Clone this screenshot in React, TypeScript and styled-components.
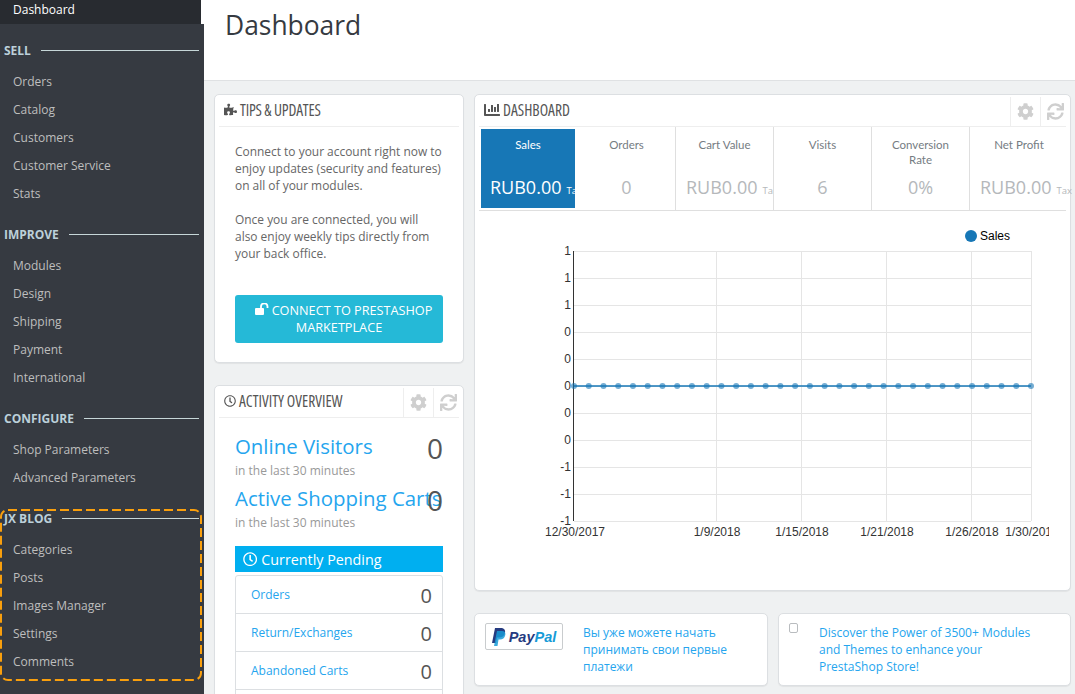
import styled, { createGlobalStyle } from "styled-components";
import { FaChartBar, FaCog, FaPuzzlePiece, FaRegClock, FaSync } from "react-icons/fa";

const GlobalStyle = createGlobalStyle`
  html, body {
    margin: 0;
    height: 694px;
    overflow: hidden;
    background: #fff;
    font-family: "Open Sans", "Noto Sans", sans-serif;
  }
  * { box-sizing: border-box; }
`;

const Page = styled.div`
  display: flex;
  width: 1075px;
  height: 694px;
  overflow: hidden;
`;

const Sidebar = styled.nav`
  flex: 0 0 204px;
  display: flex;
  flex-direction: column;
`;

const TopItem = styled.div`
  width: 201px;
  height: 24px;
  flex: none;
  padding: 0 0 6px 13px;
  display: flex;
  align-items: center;
  background: #282b30;
  color: #fff;
  font-size: 12px;
`;

const NavBody = styled.div`
  flex: 1;
  background: #363a41;
  padding-top: 9px;
`;

const NavSection = styled.section`
  position: relative;
  margin-bottom: 10px;
`;

const DashedMark = styled.svg`
  position: absolute;
  left: 0;
  top: 8px;
  pointer-events: none;
`;

const NavTitle = styled.div`
  height: 34px;
  padding: 0 5px 0 4px;
  display: flex;
  align-items: center;
  gap: 10px;
  color: #bcd0da;
  font-size: 12px;
  font-weight: 700;
  &::after {
    content: "";
    flex: 1;
    height: 1px;
    background: #c6d6d8;
  }
`;

const NavItem = styled.div`
  height: 28px;
  padding-left: 13px;
  display: flex;
  align-items: center;
  color: #bebebe;
  font-size: 12px;
`;

const Main = styled.main`
  flex: 1;
  min-width: 0;
  display: flex;
  flex-direction: column;
`;

const Header = styled.header`
  height: 81px;
  flex: none;
  padding: 7px 0 0 21px;
  background: #fff;
  border-bottom: 1px solid #dfe1e3;
`;

const PageTitle = styled.h1`
  margin: 0;
  color: #363a41;
  font-size: 26.4px;
  line-height: 36px;
  font-weight: 400;
`;

const Content = styled.div`
  flex: 1;
  background: #eff1f2;
  padding: 13px 0 0 10px;
  display: grid;
  grid-template-columns: 250px 597px;
  gap: 10px;
  align-items: start;
`;

const Column = styled.div`
  display: flex;
  flex-direction: column;
`;

const Panel = styled.div<{ $height?: number }>`
  background: #fff;
  border: 1px solid #dcdfe2;
  border-radius: 5px;
  box-shadow: 0 1px 1px rgba(0, 0, 0, 0.06);
  height: ${(p) => (p.$height ? `${p.$height}px` : "auto")};
  margin-bottom: 22px;
  padding: 0 4px;
`;

const PanelHead = styled.div`
  height: 32px;
  display: flex;
  align-items: center;
  border-bottom: 1px solid #eeeeee;
`;

const HeadTitle = styled.div<{ $tight?: boolean }>`
  flex: 1;
  display: flex;
  align-items: center;
  gap: 3px;
  margin-bottom: 2px;
  padding-left: 5px;
  white-space: nowrap;
  font-size: 15.5px;
  font-stretch: 75%;
  letter-spacing: ${(p) => (p.$tight ? "-0.2px" : "0")};
  text-transform: uppercase;
  color: #555;
`;

const ToolGroup = styled.div`
  display: flex;
  margin-right: -4px;
`;

const ToolButton = styled.div`
  width: 30px;
  height: 29px;
  margin-top: 2px;
  display: flex;
  align-items: center;
  justify-content: center;
  border-left: 1px solid #eeeeee;
  color: #cfcfcf;
  font-size: 17px;
`;

const TipsBody = styled.div`
  padding: 16px 16px 0;
  color: #666;
  font-size: 11.95px;
  line-height: 17px;
`;

const TipsText = styled.p`
  margin: 0 0 17px;
`;

const ConnectButton = styled.div`
  height: 48px;
  margin-top: 33px;
  padding: 7px 8px;
  border-radius: 3px;
  background: #25b9d7;
  color: #fff;
  font-size: 12.7px;
  line-height: 17px;
  text-align: center;
  text-transform: uppercase;
  svg { margin: 0 3px 0 9px; }
`;

const ActivityBody = styled.div`
  padding: 12px 16px 0;
`;

const StatRow = styled.div`
  display: grid;
  grid-template-columns: minmax(0, 1fr) auto;
  height: 52px;
`;

const StatTitle = styled.div`
  white-space: nowrap;
  color: #25a5ee;
  font-size: 20.4px;
  line-height: 33px;
`;

const StatNote = styled.div`
  color: #999;
  font-size: 12px;
  line-height: 14px;
  margin-top: 1px;
`;

const StatValue = styled.div`
  color: #555;
  font-size: 28px;
  line-height: 36px;
`;

const PendingBar = styled.div`
  height: 26px;
  margin-top: 12px;
  padding-left: 8px;
  display: flex;
  align-items: center;
  gap: 4px;
  background: #00aff0;
  color: #fff;
  font-size: 14.3px;
  font-weight: 500;
`;

const PendingList = styled.div`
  margin-top: 3px;
  border: 1px solid #dcdfe2;
  border-radius: 3px 3px 0 0;
`;

const PendingRow = styled.div`
  height: 38px;
  padding: 0 10px 0 15px;
  display: flex;
  align-items: center;
  justify-content: space-between;
  border-bottom: 1px solid #dcdfe2;
  color: #25a5ee;
  font-size: 12px;
`;

const PendingValue = styled.span`
  color: #555;
  font-size: 20px;
  margin-top: 2px;
`;

const KpiRow = styled.div`
  display: grid;
  grid-template-columns: 99px repeat(5, 98px);
  height: 84px;
  border-bottom: 1px solid #dfdfdf;
`;

const Kpi = styled.div<{ $active?: boolean }>`
  margin: ${(p) => (p.$active ? "2px 3px 0 2px" : "0")};
  height: ${(p) => (p.$active ? "79px" : "83px")};
  border-right: ${(p) => (p.$active ? "none" : "1px solid #dfdfdf")};
  background: ${(p) => (p.$active ? "#1777b6" : "transparent")};
  position: relative;
  overflow: hidden;
  text-align: center;
  padding-top: ${(p) => (p.$active ? "8px" : "10px")};
  &:last-child { border-right: none; overflow: visible; }
`;

const KpiLabel = styled.div<{ $active?: boolean }>`
  font-family: Lato, "Open Sans", sans-serif;
  font-size: 11.5px;
  line-height: 15px;
  padding: 0 16px;
  color: ${(p) => (p.$active ? "#fff" : "#757c82")};
`;

const KpiValue = styled.div<{ $active?: boolean; $tax?: boolean }>`
  position: absolute;
  left: ${(p) => (p.$active ? "9px" : p.$tax ? "10px" : "0")};
  right: 0;
  top: ${(p) => (p.$active ? "46px" : "48px")};
  display: flex;
  justify-content: ${(p) => (p.$tax ? "flex-start" : "center")};
  white-space: nowrap;
  align-items: baseline;
  font-size: 18px;
  line-height: 24px;
  color: ${(p) => (p.$active ? "#fff" : "#b5b8bb")};
`;

const KpiTax = styled.span`
  margin-left: 5px;
  font-size: 9.5px;
  width: 0;
`;

const ChartBox = styled.div`
  height: 379px;
  overflow: hidden;
`;

const PromoRow = styled.div`
  display: grid;
  grid-template-columns: 294px 293px;
  gap: 10px;
`;

const Promo = styled.div`
  height: 73px;
  background: #fff;
  border: 1px solid #dcdfe2;
  border-radius: 5px;
  box-shadow: 0 1px 1px rgba(0, 0, 0, 0.06);
  padding: 10px 25px 0 10px;
  display: grid;
  column-gap: 20px;
  grid-template-columns: 78px 1fr;
`;

const PromoAlt = styled(Promo)`
  grid-template-columns: 10px 1fr;
`;

const PromoText = styled.div`
  color: #25a5ee;
  font-size: 12px;
  line-height: 17px;
`;

const PayPalBadge = styled.div`
  height: 27px;
  margin-top: -1px;
  display: flex;
  align-items: center;
  justify-content: center;
  gap: 3px;
  border: 1px solid #c9ccce;
  border-radius: 2px;
  font-family: "Liberation Sans", sans-serif;
  font-size: 14.5px;
  font-weight: 700;
  font-style: italic;
  color: #253b80;
  span { color: #179bd7; }
`;

const EmptyBox = styled.div`
  width: 9px;
  height: 10px;
  margin-top: -1px;
  border: 1px solid #b9bcbf;
  border-radius: 2px;
`;

const sections = [
  { title: "Sell", items: ["Orders", "Catalog", "Customers", "Customer Service", "Stats"] },
  { title: "Improve", items: ["Modules", "Design", "Shipping", "Payment", "International"] },
  { title: "Configure", items: ["Shop Parameters", "Advanced Parameters"] },
  { title: "JX Blog", items: ["Categories", "Posts", "Images Manager", "Settings", "Comments"], marked: true },
];

const kpis = [
  { label: "Sales", value: "RUB0.00", tax: true, active: true },
  { label: "Orders", value: "0" },
  { label: "Cart Value", value: "RUB0.00", tax: true },
  { label: "Visits", value: "6" },
  { label: "Conversion Rate", value: "0%" },
  { label: "Net Profit", value: "RUB0.00", tax: true },
];

const yLabels = ["1", "1", "1", "0", "0", "0", "0", "0", "-1", "-1", "-1"];
const xLabels = [
  { x: 95, text: "12/30/2017" },
  { x: 237, text: "1/9/2018" },
  { x: 322, text: "1/15/2018" },
  { x: 407, text: "1/21/2018" },
  { x: 492, text: "1/26/2018" },
  { x: 552, text: "1/30/2018" },
];

// chart origin is x=479, y=211 in page coordinates
const Chart = () => {
  const left = 95;
  const right = 552;
  const top = 40;
  const step = 27;
  const dots = Array.from({ length: 32 }, (_, i) => left + (i * (right - left)) / 31);
  return (
    <svg width="570" height="379" fontFamily="'Liberation Sans', sans-serif" fontSize="12">
      {yLabels.map((_, i) => (
        <line key={i} x1={left} x2={right} y1={top + i * step + 0.5} y2={top + i * step + 0.5} stroke="#e5e5e5" />
      ))}
      {xLabels.slice(1).map((l) => (
        <line key={l.x} x1={l.x + 0.5} x2={l.x + 0.5} y1={top} y2={top + 270} stroke="#e5e5e5" />
      ))}
      <line x1={left - 0.5} x2={left - 0.5} y1={top} y2={top + 270} stroke="#333" />
      {yLabels.map((t, i) => (
        <text key={i} x={left - 3} y={top + i * step + 4} textAnchor="end" fill="#333">
          {t}
        </text>
      ))}
      {xLabels.map((l) => (
        <text key={l.x} x={l.x + 1} y={top + 285} textAnchor="middle" fill="#333">
          {l.text}
        </text>
      ))}
      <line x1={left} x2={right} y1={top + 135} y2={top + 135} stroke="#1777b6" strokeOpacity="0.75" strokeWidth="2" />
      {dots.map((x) => (
        <circle key={x} cx={x} cy={top + 135} r="3" fill="#1777b6" fillOpacity="0.6" />
      ))}
      <circle cx="492" cy="25" r="6" fill="#1777b6" />
      <text x="501" y="29" fill="#000">
        Sales
      </text>
    </svg>
  );
};

const UnlockIcon = () => (
  <svg width="14" height="12" viewBox="0 0 14 12">
    <rect x="0" y="5" width="9" height="7" rx="1" fill="#fff" />
    <path d="M6 5.500V3.500a3 3 0 0 1 6.500 0V5" fill="none" stroke="#fff" strokeWidth="1.8" />
  </svg>
);

const PanelTools = () => (
  <ToolGroup>
    <ToolButton>
      <FaCog />
    </ToolButton>
    <ToolButton>
      <FaSync />
    </ToolButton>
  </ToolGroup>
);

export default function App() {
  return (
    <>
      <GlobalStyle />
      <Page>
        <Sidebar>
          <TopItem>Dashboard</TopItem>
          <NavBody>
            {sections.map((s) => (
              <NavSection key={s.title}>
                <NavTitle>{s.title.toUpperCase()}</NavTitle>
                {s.items.map((item) => (
                  <NavItem key={item}>{item}</NavItem>
                ))}
                {s.marked && (
                  <DashedMark width="202" height="173">
                    <rect x="1" y="1" width="200" height="170" rx="7" fill="none" stroke="#f99f0d" strokeWidth="2" strokeDasharray="9 4" />
                  </DashedMark>
                )}
              </NavSection>
            ))}
          </NavBody>
        </Sidebar>
        <Main>
          <Header>
            <PageTitle>Dashboard</PageTitle>
          </Header>
          <Content>
            <Column>
              <Panel $height={269}>
                <PanelHead>
                  <HeadTitle $tight>
                    <FaPuzzlePiece size={13} /> Tips &amp; Updates
                  </HeadTitle>
                </PanelHead>
                <TipsBody>
                  <TipsText>
                    Connect to your account right now to enjoy updates (security and features) on all of your modules.
                  </TipsText>
                  <TipsText>
                    Once you are connected, you will also enjoy weekly tips directly from your back office.
                  </TipsText>
                  <ConnectButton>
                    <UnlockIcon />
                    Connect to PrestaShop Marketplace
                  </ConnectButton>
                </TipsBody>
              </Panel>
              <Panel>
                <PanelHead>
                  <HeadTitle>
                    <FaRegClock size={12} /> Activity Overview
                  </HeadTitle>
                  <PanelTools />
                </PanelHead>
                <ActivityBody>
                  <StatRow>
                    <div>
                      <StatTitle>Online Visitors</StatTitle>
                      <StatNote>in the last 30 minutes</StatNote>
                    </div>
                    <StatValue>0</StatValue>
                  </StatRow>
                  <StatRow>
                    <div>
                      <StatTitle>Active Shopping Carts</StatTitle>
                      <StatNote>in the last 30 minutes</StatNote>
                    </div>
                    <StatValue>0</StatValue>
                  </StatRow>
                  <PendingBar>
                    <FaRegClock /> Currently Pending
                  </PendingBar>
                  <PendingList>
                    {["Orders", "Return/Exchanges", "Abandoned Carts", ""].map((label) => (
                      <PendingRow key={label}>
                        {label}
                        {label && <PendingValue>0</PendingValue>}
                      </PendingRow>
                    ))}
                  </PendingList>
                </ActivityBody>
              </Panel>
            </Column>
            <Column>
              <Panel $height={497}>
                <PanelHead>
                  <HeadTitle>
                    <FaChartBar size={16} /> Dashboard
                  </HeadTitle>
                  <PanelTools />
                </PanelHead>
                <KpiRow>
                  {kpis.map((k) => (
                    <Kpi key={k.label} $active={k.active}>
                      <KpiLabel $active={k.active}>{k.label}</KpiLabel>
                      <KpiValue $active={k.active} $tax={k.tax}>
                        {k.value}
                        {k.tax && <KpiTax>Tax</KpiTax>}
                      </KpiValue>
                    </Kpi>
                  ))}
                </KpiRow>
                <ChartBox>
                  <Chart />
                </ChartBox>
              </Panel>
              <PromoRow>
                <Promo>
                  <PayPalBadge>
                    <svg width="14" height="18" viewBox="0 0 14 18">
                      <path d="M3 0h5.500C12 0 13.500 2 13 4.700 12.400 8 10 9.500 7 9.500H5L4 15H0z" fill="#253b80" />
                      <path d="M5 3h5c2.500 0 3.800 1.500 3.300 4-.6 3-2.800 4.500-5.300 4.500H6.500L5.500 18H2z" fill="#179bd7" opacity="0.85" />
                    </svg>
                    <div>
                      Pay<span>Pal</span>
                    </div>
                  </PayPalBadge>
                  <PromoText>Вы уже можете начать принимать свои первые платежи</PromoText>
                </Promo>
                <PromoAlt>
                  <EmptyBox />
                  <PromoText>Discover the Power of 3500+ Modules and Themes to enhance your PrestaShop Store!</PromoText>
                </PromoAlt>
              </PromoRow>
            </Column>
          </Content>
        </Main>
      </Page>
    </>
  );
}
